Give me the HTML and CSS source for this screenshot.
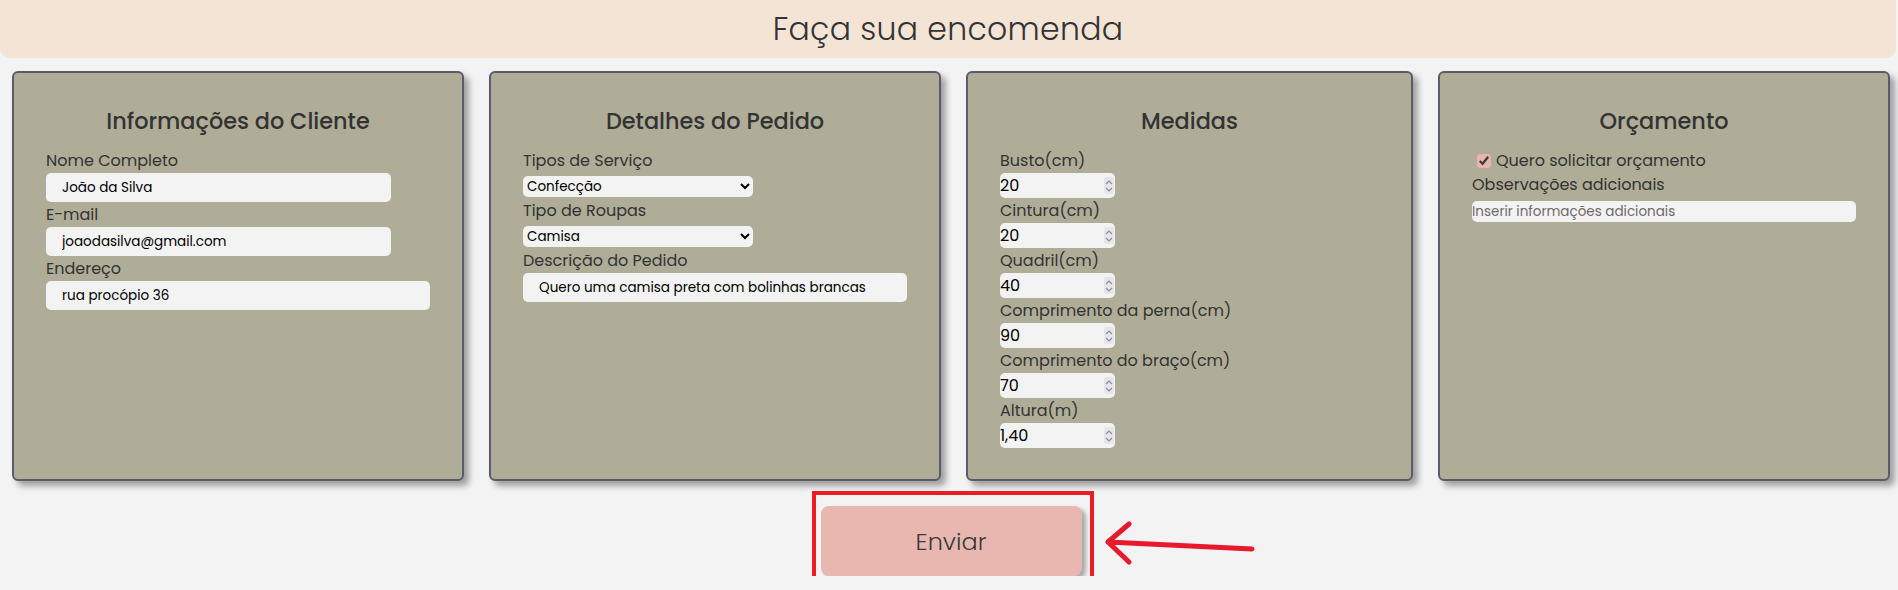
FILE: index.html
```html
<!DOCTYPE html>
<html lang="pt-BR">
<head>
<meta charset="utf-8">
<title>Faça sua encomenda</title>
<link rel="stylesheet" href="styles.css">
</head>
<body>
<header class="banner">
  <h1 class="banner-title">Faça sua encomenda</h1>
</header>
<main class="cards">
  <section class="card">
    <h2 class="card-title">Informações do Cliente</h2>
    <label class="field-label">Nome Completo</label>
    <input class="text-input" type="text" value="João da Silva">
    <label class="field-label">E-mail</label>
    <input class="text-input" type="text" value="joaodasilva@gmail.com">
    <label class="field-label">Endereço</label>
    <input class="text-input wide" type="text" value="rua procópio 36">
  </section>
  <section class="card">
    <h2 class="card-title">Detalhes do Pedido</h2>
    <label class="field-label">Tipos de Serviço</label>
    <select class="select-input"><option>Confecção</option></select>
    <label class="field-label">Tipo de Roupas</label>
    <select class="select-input"><option>Camisa</option></select>
    <label class="field-label">Descrição do Pedido</label>
    <input class="text-input wide" type="text" value="Quero uma camisa preta com bolinhas brancas">
  </section>
  <section class="card">
    <h2 class="card-title">Medidas</h2>
    <label class="field-label">Busto(cm)</label>
    <div class="num-box"><input class="num-input" type="text" value="20"><span class="spin"><svg width="10" height="14" viewBox="0 0 10 14"><path d="M2 5 L5 2 L8 5 M2 9 L5 12 L8 9" fill="none" stroke="#8c8c9a" stroke-width="1.2"/></svg></span></div>
    <label class="field-label">Cintura(cm)</label>
    <div class="num-box"><input class="num-input" type="text" value="20"><span class="spin"><svg width="10" height="14" viewBox="0 0 10 14"><path d="M2 5 L5 2 L8 5 M2 9 L5 12 L8 9" fill="none" stroke="#8c8c9a" stroke-width="1.2"/></svg></span></div>
    <label class="field-label">Quadril(cm)</label>
    <div class="num-box"><input class="num-input" type="text" value="40"><span class="spin"><svg width="10" height="14" viewBox="0 0 10 14"><path d="M2 5 L5 2 L8 5 M2 9 L5 12 L8 9" fill="none" stroke="#8c8c9a" stroke-width="1.2"/></svg></span></div>
    <label class="field-label">Comprimento da perna(cm)</label>
    <div class="num-box"><input class="num-input" type="text" value="90"><span class="spin"><svg width="10" height="14" viewBox="0 0 10 14"><path d="M2 5 L5 2 L8 5 M2 9 L5 12 L8 9" fill="none" stroke="#8c8c9a" stroke-width="1.2"/></svg></span></div>
    <label class="field-label">Comprimento do braço(cm)</label>
    <div class="num-box"><input class="num-input" type="text" value="70"><span class="spin"><svg width="10" height="14" viewBox="0 0 10 14"><path d="M2 5 L5 2 L8 5 M2 9 L5 12 L8 9" fill="none" stroke="#8c8c9a" stroke-width="1.2"/></svg></span></div>
    <label class="field-label">Altura(m)</label>
    <div class="num-box"><input class="num-input" type="text" value="1,40"><span class="spin"><svg width="10" height="14" viewBox="0 0 10 14"><path d="M2 5 L5 2 L8 5 M2 9 L5 12 L8 9" fill="none" stroke="#8c8c9a" stroke-width="1.2"/></svg></span></div>
  </section>
  <section class="card">
    <h2 class="card-title">Orçamento</h2>
    <label class="check-row"><input class="check" type="checkbox" checked>Quero solicitar orçamento</label>
    <label class="field-label obs">Observações adicionais</label>
    <input class="plain-input" type="text" placeholder="Inserir informações adicionais">
  </section>
</main>
<div class="actions">
  <div class="button-wrap">
    <button class="send-button" type="button">Enviar</button>
    <div class="highlight-box"></div>
    <svg class="arrow" width="160" height="50" viewBox="0 0 160 50">
      <path d="M6 21 L150 28 M6 21 L27 3 M6 21 L27 41" fill="none" stroke="#e8192c" stroke-width="5" stroke-linecap="round" stroke-linejoin="round"/>
    </svg>
  </div>
</div>
</body>
</html>
```
FILE: styles.css
```css
* { box-sizing: border-box; }
body {
  margin: 0;
  background: #f3f3f3;
  font-family: "Poppins", "Inter", "Open Sans", sans-serif;
  color: #333333;
}
.banner {
  height: 58px;
  margin-right: 2px;
  background: #f3e4d6;
  border-radius: 0 0 10px 10px;
  display: flex;
  align-items: center;
  justify-content: center;
}
.banner-title {
  margin: 0;
  font-size: 31.5px;
  font-weight: 300;
  color: #333333;
  letter-spacing: 0.3px;
}
.cards {
  display: flex;
  gap: 25px;
  padding: 13px 8px 0 12px;
}
.card {
  flex: 1 1 0;
  height: 410px;
  background: #afad98;
  border: 2px solid #5b5b6d;
  border-radius: 6px;
  box-shadow: 5px 5px 6px rgba(0, 0, 0, 0.35);
  padding: 31px 32px 0 32px;
  display: flex;
  flex-direction: column;
  align-items: flex-start;
}
.card-title {
  align-self: stretch;
  text-align: center;
  margin: 0 0 10px 0;
  font-size: 22.4px;
  font-weight: 500;
  line-height: 34px;
  color: #333333;
}
.field-label {
  display: block;
  font-size: 16px;
  line-height: 25px;
  color: #333333;
}
.text-input {
  width: 345px;
  height: 29px;
  border: none;
  border-radius: 5px;
  background: #f3f3f3;
  padding: 0 16px;
  font-family: inherit;
  font-size: 13.5px;
  color: #000000;
}
.text-input.wide { width: 384px; }
.select-input {
  width: 230px;
  height: 21px;
  margin: 3px 0 1px 0;
  border: none;
  border-radius: 5px;
  background: #f3f3f3;
  padding: 0;
  font-family: inherit;
  font-size: 13.5px;
  color: #000000;
}
.num-box {
  width: 115px;
  height: 25px;
  border-radius: 5px;
  background: #f3f3f3;
  display: flex;
  align-items: center;
  padding-right: 1px;
}
.num-input {
  flex: 1 1 auto;
  min-width: 0;
  height: 25px;
  border: none;
  background: transparent;
  padding: 0;
  font-family: inherit;
  font-size: 16px;
  color: #000000;
}
.spin {
  width: 17px;
  height: 17px;
  background: #e6e6ea;
  border-radius: 2px;
  display: flex;
  align-items: center;
  justify-content: center;
}
.check-row {
  display: flex;
  align-items: center;
  font-size: 16px;
  line-height: 25px;
  color: #333333;
}
.check {
  width: 14px;
  height: 14px;
  margin: 0 5px 0 5px;
  accent-color: #e8b4b0;
}
.field-label.obs { line-height: 24px; margin-bottom: 4px; }
.plain-input {
  width: 384px;
  height: 21px;
  border: none;
  border-radius: 5px;
  background: #f3f3f3;
  padding: 0;
  font-family: inherit;
  font-size: 13.5px;
  color: #000000;
}
.plain-input::placeholder { color: #6e6a6a; }
.actions {
  display: flex;
  justify-content: center;
  padding: 25px 0 0 4px;
}
.button-wrap { position: relative; }
.send-button {
  display: block;
  width: 261px;
  height: 70px;
  border: none;
  border-radius: 8px;
  background: #e8b7b0;
  box-shadow: 4px 3px 4px rgba(0, 0, 0, 0.3);
  font-family: inherit;
  font-size: 24px;
  font-weight: 300;
  color: #3a3a3a;
}
.highlight-box {
  position: absolute;
  left: -9px;
  top: -15px;
  width: 282px;
  height: 89px;
  border: 4px solid #ec1c24;
}
.arrow {
  position: absolute;
  left: 281px;
  top: 15px;
}
```
